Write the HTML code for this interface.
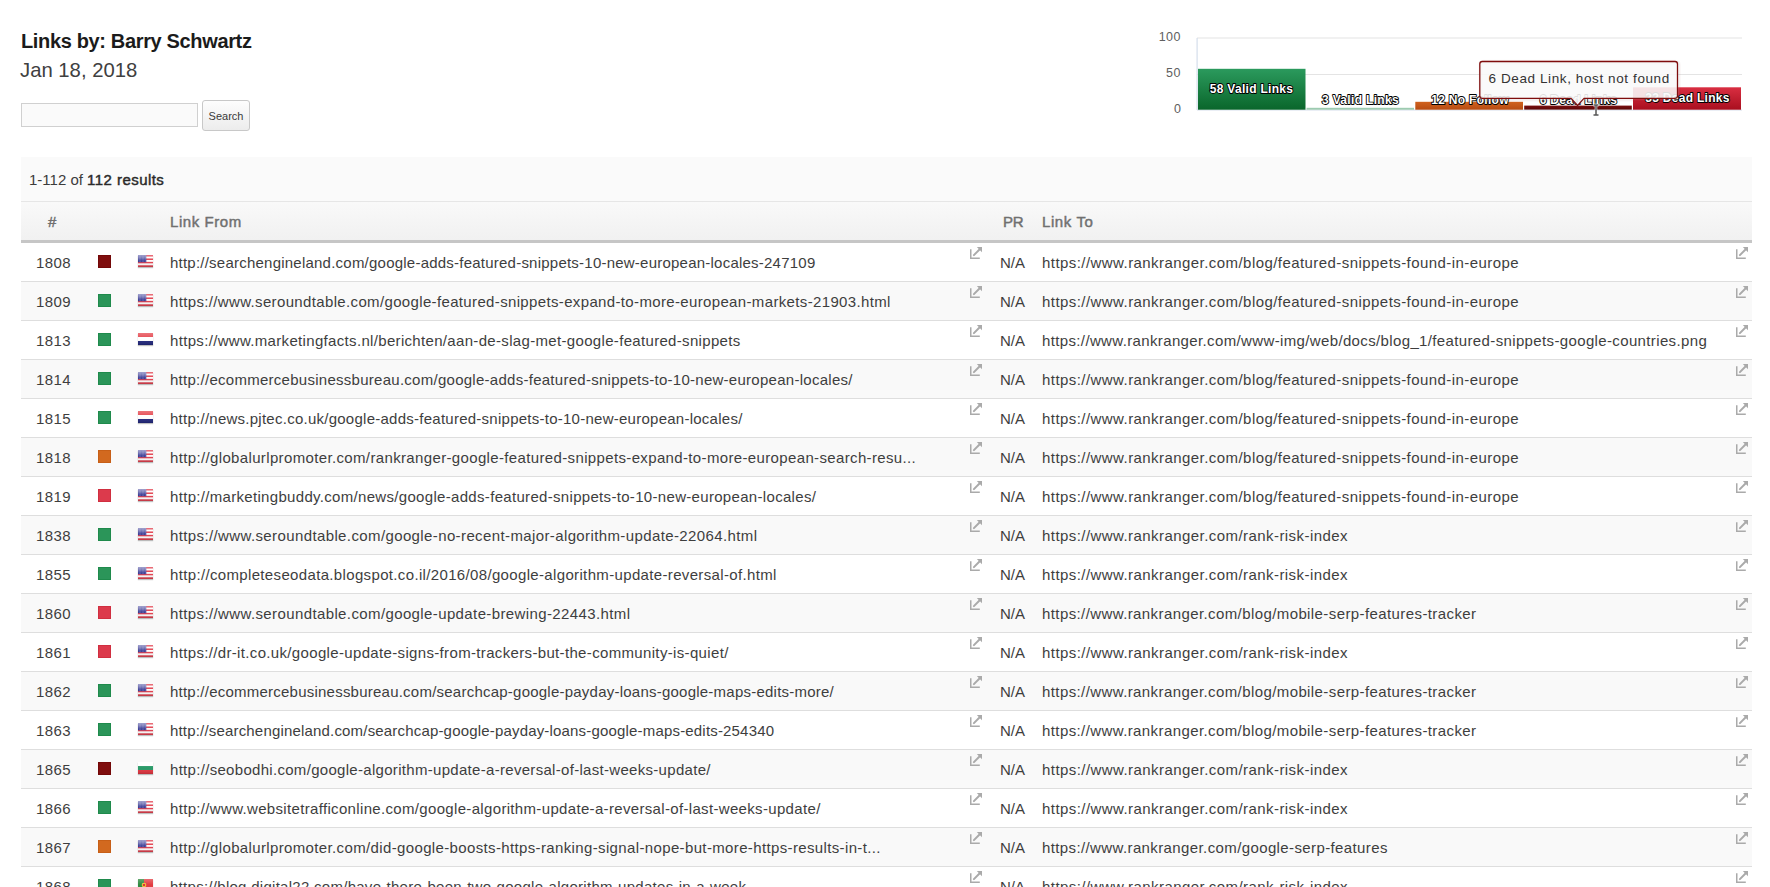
<!DOCTYPE html>
<html><head><meta charset="utf-8"><style>
*{box-sizing:border-box}
html,body{margin:0;padding:0;background:#fff;width:1770px;height:887px;overflow:hidden;font-family:"Liberation Sans",sans-serif;color:#333}
.abs{position:absolute}
#title{left:21px;top:26px;font-size:20px;font-weight:bold;color:#1b1b1b;letter-spacing:-0.35px;white-space:nowrap;line-height:30px}
#date{left:20px;top:55px;font-size:20.3px;color:#404040;white-space:nowrap;line-height:30px}
#inp{left:21px;top:103px;width:177px;height:24px;border:1px solid #d0d0d0;background:#fafafa}
#btn{left:202px;top:100px;width:48px;height:31px;border:1px solid #c8c8c8;border-radius:3px;background:linear-gradient(#fdfdfd,#ececec);font-size:11px;color:#3a3a3a;text-align:center;line-height:30px}
#panel{left:21px;top:157px;width:1731px;height:740px;background:#fafafa}
#res{position:absolute;left:0;top:0;width:1731px;height:45px;border-bottom:1px solid #e6e6e6;font-size:15px;color:#3c3c3c;line-height:46px;padding-left:8px;white-space:nowrap}
#res b{color:#2a2a2a;font-weight:normal;-webkit-text-stroke:0.45px #2a2a2a;letter-spacing:0.45px}
#head{position:absolute;left:0;top:45px;width:1731px;height:41px;background:linear-gradient(#f9f9f9,#f1f1f1);border-bottom:3px solid #c6c6c6;font-size:15px;font-weight:normal;color:#707070;-webkit-text-stroke:0.45px #707070;white-space:nowrap}
#head span{position:absolute;top:0;line-height:39px}
#rows{position:absolute;left:0;top:86px;width:1731px}
.row{position:absolute;left:0;width:1731px;height:39px;border-bottom:1px solid #dedede;font-size:15px;color:#3e3e3e;white-space:nowrap}
.row span{position:absolute;top:0;line-height:39px}
.num{left:15px;letter-spacing:0.4px}
.sq{left:77px;top:12px !important;width:13px;height:13px;border:1px solid}
.flag{position:absolute;left:117px;top:12px;box-shadow:0 1px 1px rgba(0,0,0,0.25)}
.from{left:149px}
.to{left:1021px}
.na{left:979px}
.ext{position:absolute;top:4px}
.e1{left:949px}
.e2{left:1715px}
</style></head><body>
<svg width="0" height="0" style="position:absolute"><defs><linearGradient id="cn" x1="0" y1="0" x2="0" y2="1"><stop offset="0" stop-color="#8282bd"/><stop offset="1" stop-color="#2b2d8c"/></linearGradient><linearGradient id="gl" x1="0" y1="0" x2="0" y2="1"><stop offset="0" stop-color="#fff" stop-opacity="0.25"/><stop offset="0.5" stop-color="#fff" stop-opacity="0.0"/><stop offset="1" stop-color="#000" stop-opacity="0.15"/></linearGradient></defs></svg>
<div id="title" class="abs">Links by: Barry Schwartz</div>
<div id="date" class="abs">Jan 18, 2018</div>
<div id="inp" class="abs"></div>
<div id="btn" class="abs">Search</div>
<svg class="abs" style="left:0;top:0" width="1770" height="140" viewBox="0 0 1770 140">
<defs>
<linearGradient id="gG" x1="0" y1="0" x2="0" y2="1"><stop offset="0" stop-color="#2b9a5d"/><stop offset="1" stop-color="#0a662b"/></linearGradient>
<linearGradient id="gO" x1="0" y1="0" x2="0" y2="1"><stop offset="0" stop-color="#d0621f"/><stop offset="1" stop-color="#b84c12"/></linearGradient>
<linearGradient id="gD" x1="0" y1="0" x2="0" y2="1"><stop offset="0" stop-color="#7a1010"/><stop offset="1" stop-color="#5c0505"/></linearGradient>
<linearGradient id="gR" x1="0" y1="0" x2="0" y2="1"><stop offset="0" stop-color="#d92e41"/><stop offset="1" stop-color="#a90f1f"/></linearGradient>
<filter id="tsh" x="-10%" y="-10%" width="130%" height="140%"><feOffset dx="1" dy="1"/><feGaussianBlur stdDeviation="0.8"/><feComponentTransfer><feFuncA type="linear" slope="0.25"/></feComponentTransfer><feMerge><feMergeNode/><feMergeNode in="SourceGraphic"/></feMerge></filter>
</defs>
<g font-family="Liberation Sans" font-size="12.5" fill="#606060" text-anchor="end">
<text x="1181" y="41" letter-spacing="0.5">100</text>
<text x="1181" y="77" letter-spacing="0.5">50</text>
<text x="1181" y="113">0</text>
</g>
<rect x="1197" y="37.5" width="545" height="1" fill="#e4e4e4"/>
<rect x="1197" y="74" width="545" height="1" fill="#e4e4e4"/>
<rect x="1196.5" y="38" width="1.2" height="72" fill="#d5deeb"/>
<rect x="1197" y="109.5" width="545" height="1" fill="#d5deeb"/>
<rect x="1198" y="68.8" width="107.5" height="40.9" fill="url(#gG)"/>
<rect x="1306.5" y="107.8" width="107.5" height="1.9" fill="#9dcbb0"/>
<rect x="1415.3" y="101.8" width="107.7" height="7.9" fill="url(#gO)"/>
<rect x="1524.2" y="105.6" width="107.6" height="4" fill="url(#gD)"/>
<rect x="1633" y="87.3" width="108" height="22.4" fill="url(#gR)"/>
<g font-family="Liberation Sans" font-size="12" font-weight="bold" fill="#fff" stroke="#000" stroke-width="1.8" stroke-linejoin="round" paint-order="stroke" text-anchor="middle">
<text x="1251.5" y="92.6" letter-spacing="0.3">58 Valid Links</text>
<text x="1360.5" y="104.3" letter-spacing="0.33">3 Valid Links</text>
<text x="1470" y="104.3" letter-spacing="0.3">12 No Follow</text>
<text x="1578.5" y="104.3" letter-spacing="0.3">6 Dead Links</text>
<text x="1687.5" y="102.3" letter-spacing="0.28">33 Dead Links</text>
</g>
<g filter="url(#tsh)">
<path d="M1482.3 61.5 H1675 Q1677.5 61.5 1677.5 64 V95.8 Q1677.5 98.3 1675 98.3 H1584 L1577.6 105.5 L1571 98.3 H1482.3 Q1479.8 98.3 1479.8 95.8 V64 Q1479.8 61.5 1482.3 61.5 Z" fill="rgba(249,249,249,0.86)" stroke="#7f0e0e" stroke-width="1.3"/>
</g>
<text x="1488.5" y="82.5" font-family="Liberation Sans" font-size="13.5" fill="#333" letter-spacing="0.6">6 Dead Link, host not found</text>
<g stroke="#fff" stroke-width="2.5" fill="none"><path d="M1596 105.5 V114.5 M1593 105 H1599 M1593 115 H1599"/></g>
<g stroke="#000" stroke-width="1" fill="none"><path d="M1596 105.5 V114.5 M1593.5 105 H1598.5 M1593.5 115 H1598.5"/></g>
</svg>

<div id="panel" class="abs">
<div id="res">1-112 of <b>112 results</b></div>
<div id="head"><span style="left:27px">#</span><span style="left:149px;letter-spacing:0.56px">Link From</span><span style="left:982px;letter-spacing:-0.3px">PR</span><span style="left:1021px;letter-spacing:0.6px">Link To</span></div>
<div id="rows">
<div class="row" style="top:0px;background:#ffffff">
<span class="num">1808</span><span class="sq" style="background:#7f0e0e;border-color:#730808"></span><svg class="flag" width="15" height="12" viewBox="0 0 15 12"><rect x="0" y="0.000" width="15" height="1.724" fill="#e2404e"/><rect x="0" y="1.714" width="15" height="1.724" fill="#ffffff"/><rect x="0" y="3.429" width="15" height="1.724" fill="#e2404e"/><rect x="0" y="5.143" width="15" height="1.724" fill="#ffffff"/><rect x="0" y="6.857" width="15" height="1.724" fill="#e2404e"/><rect x="0" y="8.571" width="15" height="1.724" fill="#ffffff"/><rect x="0" y="10.286" width="15" height="1.724" fill="#e2404e"/><rect x="0" y="0" width="8.3" height="7.2" fill="url(#cn)"/><rect x="0.90" y="0.80" width="0.7" height="0.7" fill="#b4b6dc" opacity="0.6"/><rect x="2.40" y="0.80" width="0.7" height="0.7" fill="#b4b6dc" opacity="0.6"/><rect x="3.90" y="0.80" width="0.7" height="0.7" fill="#b4b6dc" opacity="0.6"/><rect x="5.40" y="0.80" width="0.7" height="0.7" fill="#b4b6dc" opacity="0.6"/><rect x="6.90" y="0.80" width="0.7" height="0.7" fill="#b4b6dc" opacity="0.6"/><rect x="0.90" y="2.10" width="0.7" height="0.7" fill="#b4b6dc" opacity="0.6"/><rect x="2.40" y="2.10" width="0.7" height="0.7" fill="#b4b6dc" opacity="0.6"/><rect x="3.90" y="2.10" width="0.7" height="0.7" fill="#b4b6dc" opacity="0.6"/><rect x="5.40" y="2.10" width="0.7" height="0.7" fill="#b4b6dc" opacity="0.6"/><rect x="6.90" y="2.10" width="0.7" height="0.7" fill="#b4b6dc" opacity="0.6"/><rect x="0.90" y="3.40" width="0.7" height="0.7" fill="#b4b6dc" opacity="0.6"/><rect x="2.40" y="3.40" width="0.7" height="0.7" fill="#b4b6dc" opacity="0.6"/><rect x="3.90" y="3.40" width="0.7" height="0.7" fill="#b4b6dc" opacity="0.6"/><rect x="5.40" y="3.40" width="0.7" height="0.7" fill="#b4b6dc" opacity="0.6"/><rect x="6.90" y="3.40" width="0.7" height="0.7" fill="#b4b6dc" opacity="0.6"/><rect x="0.90" y="4.70" width="0.7" height="0.7" fill="#b4b6dc" opacity="0.6"/><rect x="2.40" y="4.70" width="0.7" height="0.7" fill="#b4b6dc" opacity="0.6"/><rect x="3.90" y="4.70" width="0.7" height="0.7" fill="#b4b6dc" opacity="0.6"/><rect x="5.40" y="4.70" width="0.7" height="0.7" fill="#b4b6dc" opacity="0.6"/><rect x="6.90" y="4.70" width="0.7" height="0.7" fill="#b4b6dc" opacity="0.6"/><rect x="0.90" y="6.00" width="0.7" height="0.7" fill="#b4b6dc" opacity="0.6"/><rect x="2.40" y="6.00" width="0.7" height="0.7" fill="#b4b6dc" opacity="0.6"/><rect x="3.90" y="6.00" width="0.7" height="0.7" fill="#b4b6dc" opacity="0.6"/><rect x="5.40" y="6.00" width="0.7" height="0.7" fill="#b4b6dc" opacity="0.6"/><rect x="6.90" y="6.00" width="0.7" height="0.7" fill="#b4b6dc" opacity="0.6"/><rect width="15" height="12" fill="url(#gl)"/></svg>
<span class="url from" style="letter-spacing:0.228px">http://searchengineland.com/google-adds-featured-snippets-10-new-european-locales-247109</span><svg class="ext e1" width="12" height="12" viewBox="0 0 12 12"><path d="M0.75 2.2 V11.25 H9.8" fill="none" stroke="#aaa" stroke-width="1.5"/><path d="M3.9 8.1 L10 2" fill="none" stroke="#aaa" stroke-width="2" stroke-linecap="round"/><path d="M6.8 0 H12 V5.2 Z" fill="#aaa"/></svg>
<span class="na">N/A</span><span class="url to" style="letter-spacing:0.439px">https://www.rankranger.com/blog/featured-snippets-found-in-europe</span><svg class="ext e2" width="12" height="12" viewBox="0 0 12 12"><path d="M0.75 2.2 V11.25 H9.8" fill="none" stroke="#aaa" stroke-width="1.5"/><path d="M3.9 8.1 L10 2" fill="none" stroke="#aaa" stroke-width="2" stroke-linecap="round"/><path d="M6.8 0 H12 V5.2 Z" fill="#aaa"/></svg>
</div><div class="row" style="top:39px;background:#f9f9f9">
<span class="num">1809</span><span class="sq" style="background:#2b9559;border-color:#1f8a4c"></span><svg class="flag" width="15" height="12" viewBox="0 0 15 12"><rect x="0" y="0.000" width="15" height="1.724" fill="#e2404e"/><rect x="0" y="1.714" width="15" height="1.724" fill="#ffffff"/><rect x="0" y="3.429" width="15" height="1.724" fill="#e2404e"/><rect x="0" y="5.143" width="15" height="1.724" fill="#ffffff"/><rect x="0" y="6.857" width="15" height="1.724" fill="#e2404e"/><rect x="0" y="8.571" width="15" height="1.724" fill="#ffffff"/><rect x="0" y="10.286" width="15" height="1.724" fill="#e2404e"/><rect x="0" y="0" width="8.3" height="7.2" fill="url(#cn)"/><rect x="0.90" y="0.80" width="0.7" height="0.7" fill="#b4b6dc" opacity="0.6"/><rect x="2.40" y="0.80" width="0.7" height="0.7" fill="#b4b6dc" opacity="0.6"/><rect x="3.90" y="0.80" width="0.7" height="0.7" fill="#b4b6dc" opacity="0.6"/><rect x="5.40" y="0.80" width="0.7" height="0.7" fill="#b4b6dc" opacity="0.6"/><rect x="6.90" y="0.80" width="0.7" height="0.7" fill="#b4b6dc" opacity="0.6"/><rect x="0.90" y="2.10" width="0.7" height="0.7" fill="#b4b6dc" opacity="0.6"/><rect x="2.40" y="2.10" width="0.7" height="0.7" fill="#b4b6dc" opacity="0.6"/><rect x="3.90" y="2.10" width="0.7" height="0.7" fill="#b4b6dc" opacity="0.6"/><rect x="5.40" y="2.10" width="0.7" height="0.7" fill="#b4b6dc" opacity="0.6"/><rect x="6.90" y="2.10" width="0.7" height="0.7" fill="#b4b6dc" opacity="0.6"/><rect x="0.90" y="3.40" width="0.7" height="0.7" fill="#b4b6dc" opacity="0.6"/><rect x="2.40" y="3.40" width="0.7" height="0.7" fill="#b4b6dc" opacity="0.6"/><rect x="3.90" y="3.40" width="0.7" height="0.7" fill="#b4b6dc" opacity="0.6"/><rect x="5.40" y="3.40" width="0.7" height="0.7" fill="#b4b6dc" opacity="0.6"/><rect x="6.90" y="3.40" width="0.7" height="0.7" fill="#b4b6dc" opacity="0.6"/><rect x="0.90" y="4.70" width="0.7" height="0.7" fill="#b4b6dc" opacity="0.6"/><rect x="2.40" y="4.70" width="0.7" height="0.7" fill="#b4b6dc" opacity="0.6"/><rect x="3.90" y="4.70" width="0.7" height="0.7" fill="#b4b6dc" opacity="0.6"/><rect x="5.40" y="4.70" width="0.7" height="0.7" fill="#b4b6dc" opacity="0.6"/><rect x="6.90" y="4.70" width="0.7" height="0.7" fill="#b4b6dc" opacity="0.6"/><rect x="0.90" y="6.00" width="0.7" height="0.7" fill="#b4b6dc" opacity="0.6"/><rect x="2.40" y="6.00" width="0.7" height="0.7" fill="#b4b6dc" opacity="0.6"/><rect x="3.90" y="6.00" width="0.7" height="0.7" fill="#b4b6dc" opacity="0.6"/><rect x="5.40" y="6.00" width="0.7" height="0.7" fill="#b4b6dc" opacity="0.6"/><rect x="6.90" y="6.00" width="0.7" height="0.7" fill="#b4b6dc" opacity="0.6"/><rect width="15" height="12" fill="url(#gl)"/></svg>
<span class="url from" style="letter-spacing:0.351px">https://www.seroundtable.com/google-featured-snippets-expand-to-more-european-markets-21903.html</span><svg class="ext e1" width="12" height="12" viewBox="0 0 12 12"><path d="M0.75 2.2 V11.25 H9.8" fill="none" stroke="#aaa" stroke-width="1.5"/><path d="M3.9 8.1 L10 2" fill="none" stroke="#aaa" stroke-width="2" stroke-linecap="round"/><path d="M6.8 0 H12 V5.2 Z" fill="#aaa"/></svg>
<span class="na">N/A</span><span class="url to" style="letter-spacing:0.439px">https://www.rankranger.com/blog/featured-snippets-found-in-europe</span><svg class="ext e2" width="12" height="12" viewBox="0 0 12 12"><path d="M0.75 2.2 V11.25 H9.8" fill="none" stroke="#aaa" stroke-width="1.5"/><path d="M3.9 8.1 L10 2" fill="none" stroke="#aaa" stroke-width="2" stroke-linecap="round"/><path d="M6.8 0 H12 V5.2 Z" fill="#aaa"/></svg>
</div><div class="row" style="top:78px;background:#ffffff">
<span class="num">1813</span><span class="sq" style="background:#2b9559;border-color:#1f8a4c"></span><svg class="flag" width="15" height="12" viewBox="0 0 15 12"><rect width="15" height="4" fill="#e5474f"/><rect y="4" width="15" height="4" fill="#fff"/><rect y="8" width="15" height="4" fill="#21277c"/><rect width="15" height="12" fill="url(#gl)"/></svg>
<span class="url from" style="letter-spacing:0.327px">https://www.marketingfacts.nl/berichten/aan-de-slag-met-google-featured-snippets</span><svg class="ext e1" width="12" height="12" viewBox="0 0 12 12"><path d="M0.75 2.2 V11.25 H9.8" fill="none" stroke="#aaa" stroke-width="1.5"/><path d="M3.9 8.1 L10 2" fill="none" stroke="#aaa" stroke-width="2" stroke-linecap="round"/><path d="M6.8 0 H12 V5.2 Z" fill="#aaa"/></svg>
<span class="na">N/A</span><span class="url to" style="letter-spacing:0.363px">https://www.rankranger.com/www-img/web/docs/blog_1/featured-snippets-google-countries.png</span><svg class="ext e2" width="12" height="12" viewBox="0 0 12 12"><path d="M0.75 2.2 V11.25 H9.8" fill="none" stroke="#aaa" stroke-width="1.5"/><path d="M3.9 8.1 L10 2" fill="none" stroke="#aaa" stroke-width="2" stroke-linecap="round"/><path d="M6.8 0 H12 V5.2 Z" fill="#aaa"/></svg>
</div><div class="row" style="top:117px;background:#f9f9f9">
<span class="num">1814</span><span class="sq" style="background:#2b9559;border-color:#1f8a4c"></span><svg class="flag" width="15" height="12" viewBox="0 0 15 12"><rect x="0" y="0.000" width="15" height="1.724" fill="#e2404e"/><rect x="0" y="1.714" width="15" height="1.724" fill="#ffffff"/><rect x="0" y="3.429" width="15" height="1.724" fill="#e2404e"/><rect x="0" y="5.143" width="15" height="1.724" fill="#ffffff"/><rect x="0" y="6.857" width="15" height="1.724" fill="#e2404e"/><rect x="0" y="8.571" width="15" height="1.724" fill="#ffffff"/><rect x="0" y="10.286" width="15" height="1.724" fill="#e2404e"/><rect x="0" y="0" width="8.3" height="7.2" fill="url(#cn)"/><rect x="0.90" y="0.80" width="0.7" height="0.7" fill="#b4b6dc" opacity="0.6"/><rect x="2.40" y="0.80" width="0.7" height="0.7" fill="#b4b6dc" opacity="0.6"/><rect x="3.90" y="0.80" width="0.7" height="0.7" fill="#b4b6dc" opacity="0.6"/><rect x="5.40" y="0.80" width="0.7" height="0.7" fill="#b4b6dc" opacity="0.6"/><rect x="6.90" y="0.80" width="0.7" height="0.7" fill="#b4b6dc" opacity="0.6"/><rect x="0.90" y="2.10" width="0.7" height="0.7" fill="#b4b6dc" opacity="0.6"/><rect x="2.40" y="2.10" width="0.7" height="0.7" fill="#b4b6dc" opacity="0.6"/><rect x="3.90" y="2.10" width="0.7" height="0.7" fill="#b4b6dc" opacity="0.6"/><rect x="5.40" y="2.10" width="0.7" height="0.7" fill="#b4b6dc" opacity="0.6"/><rect x="6.90" y="2.10" width="0.7" height="0.7" fill="#b4b6dc" opacity="0.6"/><rect x="0.90" y="3.40" width="0.7" height="0.7" fill="#b4b6dc" opacity="0.6"/><rect x="2.40" y="3.40" width="0.7" height="0.7" fill="#b4b6dc" opacity="0.6"/><rect x="3.90" y="3.40" width="0.7" height="0.7" fill="#b4b6dc" opacity="0.6"/><rect x="5.40" y="3.40" width="0.7" height="0.7" fill="#b4b6dc" opacity="0.6"/><rect x="6.90" y="3.40" width="0.7" height="0.7" fill="#b4b6dc" opacity="0.6"/><rect x="0.90" y="4.70" width="0.7" height="0.7" fill="#b4b6dc" opacity="0.6"/><rect x="2.40" y="4.70" width="0.7" height="0.7" fill="#b4b6dc" opacity="0.6"/><rect x="3.90" y="4.70" width="0.7" height="0.7" fill="#b4b6dc" opacity="0.6"/><rect x="5.40" y="4.70" width="0.7" height="0.7" fill="#b4b6dc" opacity="0.6"/><rect x="6.90" y="4.70" width="0.7" height="0.7" fill="#b4b6dc" opacity="0.6"/><rect x="0.90" y="6.00" width="0.7" height="0.7" fill="#b4b6dc" opacity="0.6"/><rect x="2.40" y="6.00" width="0.7" height="0.7" fill="#b4b6dc" opacity="0.6"/><rect x="3.90" y="6.00" width="0.7" height="0.7" fill="#b4b6dc" opacity="0.6"/><rect x="5.40" y="6.00" width="0.7" height="0.7" fill="#b4b6dc" opacity="0.6"/><rect x="6.90" y="6.00" width="0.7" height="0.7" fill="#b4b6dc" opacity="0.6"/><rect width="15" height="12" fill="url(#gl)"/></svg>
<span class="url from" style="letter-spacing:0.270px">http://ecommercebusinessbureau.com/google-adds-featured-snippets-to-10-new-european-locales/</span><svg class="ext e1" width="12" height="12" viewBox="0 0 12 12"><path d="M0.75 2.2 V11.25 H9.8" fill="none" stroke="#aaa" stroke-width="1.5"/><path d="M3.9 8.1 L10 2" fill="none" stroke="#aaa" stroke-width="2" stroke-linecap="round"/><path d="M6.8 0 H12 V5.2 Z" fill="#aaa"/></svg>
<span class="na">N/A</span><span class="url to" style="letter-spacing:0.439px">https://www.rankranger.com/blog/featured-snippets-found-in-europe</span><svg class="ext e2" width="12" height="12" viewBox="0 0 12 12"><path d="M0.75 2.2 V11.25 H9.8" fill="none" stroke="#aaa" stroke-width="1.5"/><path d="M3.9 8.1 L10 2" fill="none" stroke="#aaa" stroke-width="2" stroke-linecap="round"/><path d="M6.8 0 H12 V5.2 Z" fill="#aaa"/></svg>
</div><div class="row" style="top:156px;background:#ffffff">
<span class="num">1815</span><span class="sq" style="background:#2b9559;border-color:#1f8a4c"></span><svg class="flag" width="15" height="12" viewBox="0 0 15 12"><rect width="15" height="4" fill="#e5474f"/><rect y="4" width="15" height="4" fill="#fff"/><rect y="8" width="15" height="4" fill="#21277c"/><rect width="15" height="12" fill="url(#gl)"/></svg>
<span class="url from" style="letter-spacing:0.254px">http://news.pjtec.co.uk/google-adds-featured-snippets-to-10-new-european-locales/</span><svg class="ext e1" width="12" height="12" viewBox="0 0 12 12"><path d="M0.75 2.2 V11.25 H9.8" fill="none" stroke="#aaa" stroke-width="1.5"/><path d="M3.9 8.1 L10 2" fill="none" stroke="#aaa" stroke-width="2" stroke-linecap="round"/><path d="M6.8 0 H12 V5.2 Z" fill="#aaa"/></svg>
<span class="na">N/A</span><span class="url to" style="letter-spacing:0.439px">https://www.rankranger.com/blog/featured-snippets-found-in-europe</span><svg class="ext e2" width="12" height="12" viewBox="0 0 12 12"><path d="M0.75 2.2 V11.25 H9.8" fill="none" stroke="#aaa" stroke-width="1.5"/><path d="M3.9 8.1 L10 2" fill="none" stroke="#aaa" stroke-width="2" stroke-linecap="round"/><path d="M6.8 0 H12 V5.2 Z" fill="#aaa"/></svg>
</div><div class="row" style="top:195px;background:#f9f9f9">
<span class="num">1818</span><span class="sq" style="background:#d2691f;border-color:#c75f17"></span><svg class="flag" width="15" height="12" viewBox="0 0 15 12"><rect x="0" y="0.000" width="15" height="1.724" fill="#e2404e"/><rect x="0" y="1.714" width="15" height="1.724" fill="#ffffff"/><rect x="0" y="3.429" width="15" height="1.724" fill="#e2404e"/><rect x="0" y="5.143" width="15" height="1.724" fill="#ffffff"/><rect x="0" y="6.857" width="15" height="1.724" fill="#e2404e"/><rect x="0" y="8.571" width="15" height="1.724" fill="#ffffff"/><rect x="0" y="10.286" width="15" height="1.724" fill="#e2404e"/><rect x="0" y="0" width="8.3" height="7.2" fill="url(#cn)"/><rect x="0.90" y="0.80" width="0.7" height="0.7" fill="#b4b6dc" opacity="0.6"/><rect x="2.40" y="0.80" width="0.7" height="0.7" fill="#b4b6dc" opacity="0.6"/><rect x="3.90" y="0.80" width="0.7" height="0.7" fill="#b4b6dc" opacity="0.6"/><rect x="5.40" y="0.80" width="0.7" height="0.7" fill="#b4b6dc" opacity="0.6"/><rect x="6.90" y="0.80" width="0.7" height="0.7" fill="#b4b6dc" opacity="0.6"/><rect x="0.90" y="2.10" width="0.7" height="0.7" fill="#b4b6dc" opacity="0.6"/><rect x="2.40" y="2.10" width="0.7" height="0.7" fill="#b4b6dc" opacity="0.6"/><rect x="3.90" y="2.10" width="0.7" height="0.7" fill="#b4b6dc" opacity="0.6"/><rect x="5.40" y="2.10" width="0.7" height="0.7" fill="#b4b6dc" opacity="0.6"/><rect x="6.90" y="2.10" width="0.7" height="0.7" fill="#b4b6dc" opacity="0.6"/><rect x="0.90" y="3.40" width="0.7" height="0.7" fill="#b4b6dc" opacity="0.6"/><rect x="2.40" y="3.40" width="0.7" height="0.7" fill="#b4b6dc" opacity="0.6"/><rect x="3.90" y="3.40" width="0.7" height="0.7" fill="#b4b6dc" opacity="0.6"/><rect x="5.40" y="3.40" width="0.7" height="0.7" fill="#b4b6dc" opacity="0.6"/><rect x="6.90" y="3.40" width="0.7" height="0.7" fill="#b4b6dc" opacity="0.6"/><rect x="0.90" y="4.70" width="0.7" height="0.7" fill="#b4b6dc" opacity="0.6"/><rect x="2.40" y="4.70" width="0.7" height="0.7" fill="#b4b6dc" opacity="0.6"/><rect x="3.90" y="4.70" width="0.7" height="0.7" fill="#b4b6dc" opacity="0.6"/><rect x="5.40" y="4.70" width="0.7" height="0.7" fill="#b4b6dc" opacity="0.6"/><rect x="6.90" y="4.70" width="0.7" height="0.7" fill="#b4b6dc" opacity="0.6"/><rect x="0.90" y="6.00" width="0.7" height="0.7" fill="#b4b6dc" opacity="0.6"/><rect x="2.40" y="6.00" width="0.7" height="0.7" fill="#b4b6dc" opacity="0.6"/><rect x="3.90" y="6.00" width="0.7" height="0.7" fill="#b4b6dc" opacity="0.6"/><rect x="5.40" y="6.00" width="0.7" height="0.7" fill="#b4b6dc" opacity="0.6"/><rect x="6.90" y="6.00" width="0.7" height="0.7" fill="#b4b6dc" opacity="0.6"/><rect width="15" height="12" fill="url(#gl)"/></svg>
<span class="url from" style="letter-spacing:0.355px">http://globalurlpromoter.com/rankranger-google-featured-snippets-expand-to-more-european-search-resu...</span><svg class="ext e1" width="12" height="12" viewBox="0 0 12 12"><path d="M0.75 2.2 V11.25 H9.8" fill="none" stroke="#aaa" stroke-width="1.5"/><path d="M3.9 8.1 L10 2" fill="none" stroke="#aaa" stroke-width="2" stroke-linecap="round"/><path d="M6.8 0 H12 V5.2 Z" fill="#aaa"/></svg>
<span class="na">N/A</span><span class="url to" style="letter-spacing:0.439px">https://www.rankranger.com/blog/featured-snippets-found-in-europe</span><svg class="ext e2" width="12" height="12" viewBox="0 0 12 12"><path d="M0.75 2.2 V11.25 H9.8" fill="none" stroke="#aaa" stroke-width="1.5"/><path d="M3.9 8.1 L10 2" fill="none" stroke="#aaa" stroke-width="2" stroke-linecap="round"/><path d="M6.8 0 H12 V5.2 Z" fill="#aaa"/></svg>
</div><div class="row" style="top:234px;background:#ffffff">
<span class="num">1819</span><span class="sq" style="background:#dc3a4c;border-color:#d02f40"></span><svg class="flag" width="15" height="12" viewBox="0 0 15 12"><rect x="0" y="0.000" width="15" height="1.724" fill="#e2404e"/><rect x="0" y="1.714" width="15" height="1.724" fill="#ffffff"/><rect x="0" y="3.429" width="15" height="1.724" fill="#e2404e"/><rect x="0" y="5.143" width="15" height="1.724" fill="#ffffff"/><rect x="0" y="6.857" width="15" height="1.724" fill="#e2404e"/><rect x="0" y="8.571" width="15" height="1.724" fill="#ffffff"/><rect x="0" y="10.286" width="15" height="1.724" fill="#e2404e"/><rect x="0" y="0" width="8.3" height="7.2" fill="url(#cn)"/><rect x="0.90" y="0.80" width="0.7" height="0.7" fill="#b4b6dc" opacity="0.6"/><rect x="2.40" y="0.80" width="0.7" height="0.7" fill="#b4b6dc" opacity="0.6"/><rect x="3.90" y="0.80" width="0.7" height="0.7" fill="#b4b6dc" opacity="0.6"/><rect x="5.40" y="0.80" width="0.7" height="0.7" fill="#b4b6dc" opacity="0.6"/><rect x="6.90" y="0.80" width="0.7" height="0.7" fill="#b4b6dc" opacity="0.6"/><rect x="0.90" y="2.10" width="0.7" height="0.7" fill="#b4b6dc" opacity="0.6"/><rect x="2.40" y="2.10" width="0.7" height="0.7" fill="#b4b6dc" opacity="0.6"/><rect x="3.90" y="2.10" width="0.7" height="0.7" fill="#b4b6dc" opacity="0.6"/><rect x="5.40" y="2.10" width="0.7" height="0.7" fill="#b4b6dc" opacity="0.6"/><rect x="6.90" y="2.10" width="0.7" height="0.7" fill="#b4b6dc" opacity="0.6"/><rect x="0.90" y="3.40" width="0.7" height="0.7" fill="#b4b6dc" opacity="0.6"/><rect x="2.40" y="3.40" width="0.7" height="0.7" fill="#b4b6dc" opacity="0.6"/><rect x="3.90" y="3.40" width="0.7" height="0.7" fill="#b4b6dc" opacity="0.6"/><rect x="5.40" y="3.40" width="0.7" height="0.7" fill="#b4b6dc" opacity="0.6"/><rect x="6.90" y="3.40" width="0.7" height="0.7" fill="#b4b6dc" opacity="0.6"/><rect x="0.90" y="4.70" width="0.7" height="0.7" fill="#b4b6dc" opacity="0.6"/><rect x="2.40" y="4.70" width="0.7" height="0.7" fill="#b4b6dc" opacity="0.6"/><rect x="3.90" y="4.70" width="0.7" height="0.7" fill="#b4b6dc" opacity="0.6"/><rect x="5.40" y="4.70" width="0.7" height="0.7" fill="#b4b6dc" opacity="0.6"/><rect x="6.90" y="4.70" width="0.7" height="0.7" fill="#b4b6dc" opacity="0.6"/><rect x="0.90" y="6.00" width="0.7" height="0.7" fill="#b4b6dc" opacity="0.6"/><rect x="2.40" y="6.00" width="0.7" height="0.7" fill="#b4b6dc" opacity="0.6"/><rect x="3.90" y="6.00" width="0.7" height="0.7" fill="#b4b6dc" opacity="0.6"/><rect x="5.40" y="6.00" width="0.7" height="0.7" fill="#b4b6dc" opacity="0.6"/><rect x="6.90" y="6.00" width="0.7" height="0.7" fill="#b4b6dc" opacity="0.6"/><rect width="15" height="12" fill="url(#gl)"/></svg>
<span class="url from" style="letter-spacing:0.316px">http://marketingbuddy.com/news/google-adds-featured-snippets-to-10-new-european-locales/</span><svg class="ext e1" width="12" height="12" viewBox="0 0 12 12"><path d="M0.75 2.2 V11.25 H9.8" fill="none" stroke="#aaa" stroke-width="1.5"/><path d="M3.9 8.1 L10 2" fill="none" stroke="#aaa" stroke-width="2" stroke-linecap="round"/><path d="M6.8 0 H12 V5.2 Z" fill="#aaa"/></svg>
<span class="na">N/A</span><span class="url to" style="letter-spacing:0.439px">https://www.rankranger.com/blog/featured-snippets-found-in-europe</span><svg class="ext e2" width="12" height="12" viewBox="0 0 12 12"><path d="M0.75 2.2 V11.25 H9.8" fill="none" stroke="#aaa" stroke-width="1.5"/><path d="M3.9 8.1 L10 2" fill="none" stroke="#aaa" stroke-width="2" stroke-linecap="round"/><path d="M6.8 0 H12 V5.2 Z" fill="#aaa"/></svg>
</div><div class="row" style="top:273px;background:#f9f9f9">
<span class="num">1838</span><span class="sq" style="background:#2b9559;border-color:#1f8a4c"></span><svg class="flag" width="15" height="12" viewBox="0 0 15 12"><rect x="0" y="0.000" width="15" height="1.724" fill="#e2404e"/><rect x="0" y="1.714" width="15" height="1.724" fill="#ffffff"/><rect x="0" y="3.429" width="15" height="1.724" fill="#e2404e"/><rect x="0" y="5.143" width="15" height="1.724" fill="#ffffff"/><rect x="0" y="6.857" width="15" height="1.724" fill="#e2404e"/><rect x="0" y="8.571" width="15" height="1.724" fill="#ffffff"/><rect x="0" y="10.286" width="15" height="1.724" fill="#e2404e"/><rect x="0" y="0" width="8.3" height="7.2" fill="url(#cn)"/><rect x="0.90" y="0.80" width="0.7" height="0.7" fill="#b4b6dc" opacity="0.6"/><rect x="2.40" y="0.80" width="0.7" height="0.7" fill="#b4b6dc" opacity="0.6"/><rect x="3.90" y="0.80" width="0.7" height="0.7" fill="#b4b6dc" opacity="0.6"/><rect x="5.40" y="0.80" width="0.7" height="0.7" fill="#b4b6dc" opacity="0.6"/><rect x="6.90" y="0.80" width="0.7" height="0.7" fill="#b4b6dc" opacity="0.6"/><rect x="0.90" y="2.10" width="0.7" height="0.7" fill="#b4b6dc" opacity="0.6"/><rect x="2.40" y="2.10" width="0.7" height="0.7" fill="#b4b6dc" opacity="0.6"/><rect x="3.90" y="2.10" width="0.7" height="0.7" fill="#b4b6dc" opacity="0.6"/><rect x="5.40" y="2.10" width="0.7" height="0.7" fill="#b4b6dc" opacity="0.6"/><rect x="6.90" y="2.10" width="0.7" height="0.7" fill="#b4b6dc" opacity="0.6"/><rect x="0.90" y="3.40" width="0.7" height="0.7" fill="#b4b6dc" opacity="0.6"/><rect x="2.40" y="3.40" width="0.7" height="0.7" fill="#b4b6dc" opacity="0.6"/><rect x="3.90" y="3.40" width="0.7" height="0.7" fill="#b4b6dc" opacity="0.6"/><rect x="5.40" y="3.40" width="0.7" height="0.7" fill="#b4b6dc" opacity="0.6"/><rect x="6.90" y="3.40" width="0.7" height="0.7" fill="#b4b6dc" opacity="0.6"/><rect x="0.90" y="4.70" width="0.7" height="0.7" fill="#b4b6dc" opacity="0.6"/><rect x="2.40" y="4.70" width="0.7" height="0.7" fill="#b4b6dc" opacity="0.6"/><rect x="3.90" y="4.70" width="0.7" height="0.7" fill="#b4b6dc" opacity="0.6"/><rect x="5.40" y="4.70" width="0.7" height="0.7" fill="#b4b6dc" opacity="0.6"/><rect x="6.90" y="4.70" width="0.7" height="0.7" fill="#b4b6dc" opacity="0.6"/><rect x="0.90" y="6.00" width="0.7" height="0.7" fill="#b4b6dc" opacity="0.6"/><rect x="2.40" y="6.00" width="0.7" height="0.7" fill="#b4b6dc" opacity="0.6"/><rect x="3.90" y="6.00" width="0.7" height="0.7" fill="#b4b6dc" opacity="0.6"/><rect x="5.40" y="6.00" width="0.7" height="0.7" fill="#b4b6dc" opacity="0.6"/><rect x="6.90" y="6.00" width="0.7" height="0.7" fill="#b4b6dc" opacity="0.6"/><rect width="15" height="12" fill="url(#gl)"/></svg>
<span class="url from" style="letter-spacing:0.385px">https://www.seroundtable.com/google-no-recent-major-algorithm-update-22064.html</span><svg class="ext e1" width="12" height="12" viewBox="0 0 12 12"><path d="M0.75 2.2 V11.25 H9.8" fill="none" stroke="#aaa" stroke-width="1.5"/><path d="M3.9 8.1 L10 2" fill="none" stroke="#aaa" stroke-width="2" stroke-linecap="round"/><path d="M6.8 0 H12 V5.2 Z" fill="#aaa"/></svg>
<span class="na">N/A</span><span class="url to" style="letter-spacing:0.437px">https://www.rankranger.com/rank-risk-index</span><svg class="ext e2" width="12" height="12" viewBox="0 0 12 12"><path d="M0.75 2.2 V11.25 H9.8" fill="none" stroke="#aaa" stroke-width="1.5"/><path d="M3.9 8.1 L10 2" fill="none" stroke="#aaa" stroke-width="2" stroke-linecap="round"/><path d="M6.8 0 H12 V5.2 Z" fill="#aaa"/></svg>
</div><div class="row" style="top:312px;background:#ffffff">
<span class="num">1855</span><span class="sq" style="background:#2b9559;border-color:#1f8a4c"></span><svg class="flag" width="15" height="12" viewBox="0 0 15 12"><rect x="0" y="0.000" width="15" height="1.724" fill="#e2404e"/><rect x="0" y="1.714" width="15" height="1.724" fill="#ffffff"/><rect x="0" y="3.429" width="15" height="1.724" fill="#e2404e"/><rect x="0" y="5.143" width="15" height="1.724" fill="#ffffff"/><rect x="0" y="6.857" width="15" height="1.724" fill="#e2404e"/><rect x="0" y="8.571" width="15" height="1.724" fill="#ffffff"/><rect x="0" y="10.286" width="15" height="1.724" fill="#e2404e"/><rect x="0" y="0" width="8.3" height="7.2" fill="url(#cn)"/><rect x="0.90" y="0.80" width="0.7" height="0.7" fill="#b4b6dc" opacity="0.6"/><rect x="2.40" y="0.80" width="0.7" height="0.7" fill="#b4b6dc" opacity="0.6"/><rect x="3.90" y="0.80" width="0.7" height="0.7" fill="#b4b6dc" opacity="0.6"/><rect x="5.40" y="0.80" width="0.7" height="0.7" fill="#b4b6dc" opacity="0.6"/><rect x="6.90" y="0.80" width="0.7" height="0.7" fill="#b4b6dc" opacity="0.6"/><rect x="0.90" y="2.10" width="0.7" height="0.7" fill="#b4b6dc" opacity="0.6"/><rect x="2.40" y="2.10" width="0.7" height="0.7" fill="#b4b6dc" opacity="0.6"/><rect x="3.90" y="2.10" width="0.7" height="0.7" fill="#b4b6dc" opacity="0.6"/><rect x="5.40" y="2.10" width="0.7" height="0.7" fill="#b4b6dc" opacity="0.6"/><rect x="6.90" y="2.10" width="0.7" height="0.7" fill="#b4b6dc" opacity="0.6"/><rect x="0.90" y="3.40" width="0.7" height="0.7" fill="#b4b6dc" opacity="0.6"/><rect x="2.40" y="3.40" width="0.7" height="0.7" fill="#b4b6dc" opacity="0.6"/><rect x="3.90" y="3.40" width="0.7" height="0.7" fill="#b4b6dc" opacity="0.6"/><rect x="5.40" y="3.40" width="0.7" height="0.7" fill="#b4b6dc" opacity="0.6"/><rect x="6.90" y="3.40" width="0.7" height="0.7" fill="#b4b6dc" opacity="0.6"/><rect x="0.90" y="4.70" width="0.7" height="0.7" fill="#b4b6dc" opacity="0.6"/><rect x="2.40" y="4.70" width="0.7" height="0.7" fill="#b4b6dc" opacity="0.6"/><rect x="3.90" y="4.70" width="0.7" height="0.7" fill="#b4b6dc" opacity="0.6"/><rect x="5.40" y="4.70" width="0.7" height="0.7" fill="#b4b6dc" opacity="0.6"/><rect x="6.90" y="4.70" width="0.7" height="0.7" fill="#b4b6dc" opacity="0.6"/><rect x="0.90" y="6.00" width="0.7" height="0.7" fill="#b4b6dc" opacity="0.6"/><rect x="2.40" y="6.00" width="0.7" height="0.7" fill="#b4b6dc" opacity="0.6"/><rect x="3.90" y="6.00" width="0.7" height="0.7" fill="#b4b6dc" opacity="0.6"/><rect x="5.40" y="6.00" width="0.7" height="0.7" fill="#b4b6dc" opacity="0.6"/><rect x="6.90" y="6.00" width="0.7" height="0.7" fill="#b4b6dc" opacity="0.6"/><rect width="15" height="12" fill="url(#gl)"/></svg>
<span class="url from" style="letter-spacing:0.345px">http://completeseodata.blogspot.co.il/2016/08/google-algorithm-update-reversal-of.html</span><svg class="ext e1" width="12" height="12" viewBox="0 0 12 12"><path d="M0.75 2.2 V11.25 H9.8" fill="none" stroke="#aaa" stroke-width="1.5"/><path d="M3.9 8.1 L10 2" fill="none" stroke="#aaa" stroke-width="2" stroke-linecap="round"/><path d="M6.8 0 H12 V5.2 Z" fill="#aaa"/></svg>
<span class="na">N/A</span><span class="url to" style="letter-spacing:0.437px">https://www.rankranger.com/rank-risk-index</span><svg class="ext e2" width="12" height="12" viewBox="0 0 12 12"><path d="M0.75 2.2 V11.25 H9.8" fill="none" stroke="#aaa" stroke-width="1.5"/><path d="M3.9 8.1 L10 2" fill="none" stroke="#aaa" stroke-width="2" stroke-linecap="round"/><path d="M6.8 0 H12 V5.2 Z" fill="#aaa"/></svg>
</div><div class="row" style="top:351px;background:#f9f9f9">
<span class="num">1860</span><span class="sq" style="background:#dc3a4c;border-color:#d02f40"></span><svg class="flag" width="15" height="12" viewBox="0 0 15 12"><rect x="0" y="0.000" width="15" height="1.724" fill="#e2404e"/><rect x="0" y="1.714" width="15" height="1.724" fill="#ffffff"/><rect x="0" y="3.429" width="15" height="1.724" fill="#e2404e"/><rect x="0" y="5.143" width="15" height="1.724" fill="#ffffff"/><rect x="0" y="6.857" width="15" height="1.724" fill="#e2404e"/><rect x="0" y="8.571" width="15" height="1.724" fill="#ffffff"/><rect x="0" y="10.286" width="15" height="1.724" fill="#e2404e"/><rect x="0" y="0" width="8.3" height="7.2" fill="url(#cn)"/><rect x="0.90" y="0.80" width="0.7" height="0.7" fill="#b4b6dc" opacity="0.6"/><rect x="2.40" y="0.80" width="0.7" height="0.7" fill="#b4b6dc" opacity="0.6"/><rect x="3.90" y="0.80" width="0.7" height="0.7" fill="#b4b6dc" opacity="0.6"/><rect x="5.40" y="0.80" width="0.7" height="0.7" fill="#b4b6dc" opacity="0.6"/><rect x="6.90" y="0.80" width="0.7" height="0.7" fill="#b4b6dc" opacity="0.6"/><rect x="0.90" y="2.10" width="0.7" height="0.7" fill="#b4b6dc" opacity="0.6"/><rect x="2.40" y="2.10" width="0.7" height="0.7" fill="#b4b6dc" opacity="0.6"/><rect x="3.90" y="2.10" width="0.7" height="0.7" fill="#b4b6dc" opacity="0.6"/><rect x="5.40" y="2.10" width="0.7" height="0.7" fill="#b4b6dc" opacity="0.6"/><rect x="6.90" y="2.10" width="0.7" height="0.7" fill="#b4b6dc" opacity="0.6"/><rect x="0.90" y="3.40" width="0.7" height="0.7" fill="#b4b6dc" opacity="0.6"/><rect x="2.40" y="3.40" width="0.7" height="0.7" fill="#b4b6dc" opacity="0.6"/><rect x="3.90" y="3.40" width="0.7" height="0.7" fill="#b4b6dc" opacity="0.6"/><rect x="5.40" y="3.40" width="0.7" height="0.7" fill="#b4b6dc" opacity="0.6"/><rect x="6.90" y="3.40" width="0.7" height="0.7" fill="#b4b6dc" opacity="0.6"/><rect x="0.90" y="4.70" width="0.7" height="0.7" fill="#b4b6dc" opacity="0.6"/><rect x="2.40" y="4.70" width="0.7" height="0.7" fill="#b4b6dc" opacity="0.6"/><rect x="3.90" y="4.70" width="0.7" height="0.7" fill="#b4b6dc" opacity="0.6"/><rect x="5.40" y="4.70" width="0.7" height="0.7" fill="#b4b6dc" opacity="0.6"/><rect x="6.90" y="4.70" width="0.7" height="0.7" fill="#b4b6dc" opacity="0.6"/><rect x="0.90" y="6.00" width="0.7" height="0.7" fill="#b4b6dc" opacity="0.6"/><rect x="2.40" y="6.00" width="0.7" height="0.7" fill="#b4b6dc" opacity="0.6"/><rect x="3.90" y="6.00" width="0.7" height="0.7" fill="#b4b6dc" opacity="0.6"/><rect x="5.40" y="6.00" width="0.7" height="0.7" fill="#b4b6dc" opacity="0.6"/><rect x="6.90" y="6.00" width="0.7" height="0.7" fill="#b4b6dc" opacity="0.6"/><rect width="15" height="12" fill="url(#gl)"/></svg>
<span class="url from" style="letter-spacing:0.385px">https://www.seroundtable.com/google-update-brewing-22443.html</span><svg class="ext e1" width="12" height="12" viewBox="0 0 12 12"><path d="M0.75 2.2 V11.25 H9.8" fill="none" stroke="#aaa" stroke-width="1.5"/><path d="M3.9 8.1 L10 2" fill="none" stroke="#aaa" stroke-width="2" stroke-linecap="round"/><path d="M6.8 0 H12 V5.2 Z" fill="#aaa"/></svg>
<span class="na">N/A</span><span class="url to" style="letter-spacing:0.405px">https://www.rankranger.com/blog/mobile-serp-features-tracker</span><svg class="ext e2" width="12" height="12" viewBox="0 0 12 12"><path d="M0.75 2.2 V11.25 H9.8" fill="none" stroke="#aaa" stroke-width="1.5"/><path d="M3.9 8.1 L10 2" fill="none" stroke="#aaa" stroke-width="2" stroke-linecap="round"/><path d="M6.8 0 H12 V5.2 Z" fill="#aaa"/></svg>
</div><div class="row" style="top:390px;background:#ffffff">
<span class="num">1861</span><span class="sq" style="background:#dc3a4c;border-color:#d02f40"></span><svg class="flag" width="15" height="12" viewBox="0 0 15 12"><rect x="0" y="0.000" width="15" height="1.724" fill="#e2404e"/><rect x="0" y="1.714" width="15" height="1.724" fill="#ffffff"/><rect x="0" y="3.429" width="15" height="1.724" fill="#e2404e"/><rect x="0" y="5.143" width="15" height="1.724" fill="#ffffff"/><rect x="0" y="6.857" width="15" height="1.724" fill="#e2404e"/><rect x="0" y="8.571" width="15" height="1.724" fill="#ffffff"/><rect x="0" y="10.286" width="15" height="1.724" fill="#e2404e"/><rect x="0" y="0" width="8.3" height="7.2" fill="url(#cn)"/><rect x="0.90" y="0.80" width="0.7" height="0.7" fill="#b4b6dc" opacity="0.6"/><rect x="2.40" y="0.80" width="0.7" height="0.7" fill="#b4b6dc" opacity="0.6"/><rect x="3.90" y="0.80" width="0.7" height="0.7" fill="#b4b6dc" opacity="0.6"/><rect x="5.40" y="0.80" width="0.7" height="0.7" fill="#b4b6dc" opacity="0.6"/><rect x="6.90" y="0.80" width="0.7" height="0.7" fill="#b4b6dc" opacity="0.6"/><rect x="0.90" y="2.10" width="0.7" height="0.7" fill="#b4b6dc" opacity="0.6"/><rect x="2.40" y="2.10" width="0.7" height="0.7" fill="#b4b6dc" opacity="0.6"/><rect x="3.90" y="2.10" width="0.7" height="0.7" fill="#b4b6dc" opacity="0.6"/><rect x="5.40" y="2.10" width="0.7" height="0.7" fill="#b4b6dc" opacity="0.6"/><rect x="6.90" y="2.10" width="0.7" height="0.7" fill="#b4b6dc" opacity="0.6"/><rect x="0.90" y="3.40" width="0.7" height="0.7" fill="#b4b6dc" opacity="0.6"/><rect x="2.40" y="3.40" width="0.7" height="0.7" fill="#b4b6dc" opacity="0.6"/><rect x="3.90" y="3.40" width="0.7" height="0.7" fill="#b4b6dc" opacity="0.6"/><rect x="5.40" y="3.40" width="0.7" height="0.7" fill="#b4b6dc" opacity="0.6"/><rect x="6.90" y="3.40" width="0.7" height="0.7" fill="#b4b6dc" opacity="0.6"/><rect x="0.90" y="4.70" width="0.7" height="0.7" fill="#b4b6dc" opacity="0.6"/><rect x="2.40" y="4.70" width="0.7" height="0.7" fill="#b4b6dc" opacity="0.6"/><rect x="3.90" y="4.70" width="0.7" height="0.7" fill="#b4b6dc" opacity="0.6"/><rect x="5.40" y="4.70" width="0.7" height="0.7" fill="#b4b6dc" opacity="0.6"/><rect x="6.90" y="4.70" width="0.7" height="0.7" fill="#b4b6dc" opacity="0.6"/><rect x="0.90" y="6.00" width="0.7" height="0.7" fill="#b4b6dc" opacity="0.6"/><rect x="2.40" y="6.00" width="0.7" height="0.7" fill="#b4b6dc" opacity="0.6"/><rect x="3.90" y="6.00" width="0.7" height="0.7" fill="#b4b6dc" opacity="0.6"/><rect x="5.40" y="6.00" width="0.7" height="0.7" fill="#b4b6dc" opacity="0.6"/><rect x="6.90" y="6.00" width="0.7" height="0.7" fill="#b4b6dc" opacity="0.6"/><rect width="15" height="12" fill="url(#gl)"/></svg>
<span class="url from" style="letter-spacing:0.341px">https://dr-it.co.uk/google-update-signs-from-trackers-but-the-community-is-quiet/</span><svg class="ext e1" width="12" height="12" viewBox="0 0 12 12"><path d="M0.75 2.2 V11.25 H9.8" fill="none" stroke="#aaa" stroke-width="1.5"/><path d="M3.9 8.1 L10 2" fill="none" stroke="#aaa" stroke-width="2" stroke-linecap="round"/><path d="M6.8 0 H12 V5.2 Z" fill="#aaa"/></svg>
<span class="na">N/A</span><span class="url to" style="letter-spacing:0.437px">https://www.rankranger.com/rank-risk-index</span><svg class="ext e2" width="12" height="12" viewBox="0 0 12 12"><path d="M0.75 2.2 V11.25 H9.8" fill="none" stroke="#aaa" stroke-width="1.5"/><path d="M3.9 8.1 L10 2" fill="none" stroke="#aaa" stroke-width="2" stroke-linecap="round"/><path d="M6.8 0 H12 V5.2 Z" fill="#aaa"/></svg>
</div><div class="row" style="top:429px;background:#f9f9f9">
<span class="num">1862</span><span class="sq" style="background:#2b9559;border-color:#1f8a4c"></span><svg class="flag" width="15" height="12" viewBox="0 0 15 12"><rect x="0" y="0.000" width="15" height="1.724" fill="#e2404e"/><rect x="0" y="1.714" width="15" height="1.724" fill="#ffffff"/><rect x="0" y="3.429" width="15" height="1.724" fill="#e2404e"/><rect x="0" y="5.143" width="15" height="1.724" fill="#ffffff"/><rect x="0" y="6.857" width="15" height="1.724" fill="#e2404e"/><rect x="0" y="8.571" width="15" height="1.724" fill="#ffffff"/><rect x="0" y="10.286" width="15" height="1.724" fill="#e2404e"/><rect x="0" y="0" width="8.3" height="7.2" fill="url(#cn)"/><rect x="0.90" y="0.80" width="0.7" height="0.7" fill="#b4b6dc" opacity="0.6"/><rect x="2.40" y="0.80" width="0.7" height="0.7" fill="#b4b6dc" opacity="0.6"/><rect x="3.90" y="0.80" width="0.7" height="0.7" fill="#b4b6dc" opacity="0.6"/><rect x="5.40" y="0.80" width="0.7" height="0.7" fill="#b4b6dc" opacity="0.6"/><rect x="6.90" y="0.80" width="0.7" height="0.7" fill="#b4b6dc" opacity="0.6"/><rect x="0.90" y="2.10" width="0.7" height="0.7" fill="#b4b6dc" opacity="0.6"/><rect x="2.40" y="2.10" width="0.7" height="0.7" fill="#b4b6dc" opacity="0.6"/><rect x="3.90" y="2.10" width="0.7" height="0.7" fill="#b4b6dc" opacity="0.6"/><rect x="5.40" y="2.10" width="0.7" height="0.7" fill="#b4b6dc" opacity="0.6"/><rect x="6.90" y="2.10" width="0.7" height="0.7" fill="#b4b6dc" opacity="0.6"/><rect x="0.90" y="3.40" width="0.7" height="0.7" fill="#b4b6dc" opacity="0.6"/><rect x="2.40" y="3.40" width="0.7" height="0.7" fill="#b4b6dc" opacity="0.6"/><rect x="3.90" y="3.40" width="0.7" height="0.7" fill="#b4b6dc" opacity="0.6"/><rect x="5.40" y="3.40" width="0.7" height="0.7" fill="#b4b6dc" opacity="0.6"/><rect x="6.90" y="3.40" width="0.7" height="0.7" fill="#b4b6dc" opacity="0.6"/><rect x="0.90" y="4.70" width="0.7" height="0.7" fill="#b4b6dc" opacity="0.6"/><rect x="2.40" y="4.70" width="0.7" height="0.7" fill="#b4b6dc" opacity="0.6"/><rect x="3.90" y="4.70" width="0.7" height="0.7" fill="#b4b6dc" opacity="0.6"/><rect x="5.40" y="4.70" width="0.7" height="0.7" fill="#b4b6dc" opacity="0.6"/><rect x="6.90" y="4.70" width="0.7" height="0.7" fill="#b4b6dc" opacity="0.6"/><rect x="0.90" y="6.00" width="0.7" height="0.7" fill="#b4b6dc" opacity="0.6"/><rect x="2.40" y="6.00" width="0.7" height="0.7" fill="#b4b6dc" opacity="0.6"/><rect x="3.90" y="6.00" width="0.7" height="0.7" fill="#b4b6dc" opacity="0.6"/><rect x="5.40" y="6.00" width="0.7" height="0.7" fill="#b4b6dc" opacity="0.6"/><rect x="6.90" y="6.00" width="0.7" height="0.7" fill="#b4b6dc" opacity="0.6"/><rect width="15" height="12" fill="url(#gl)"/></svg>
<span class="url from" style="letter-spacing:0.231px">http://ecommercebusinessbureau.com/searchcap-google-payday-loans-google-maps-edits-more/</span><svg class="ext e1" width="12" height="12" viewBox="0 0 12 12"><path d="M0.75 2.2 V11.25 H9.8" fill="none" stroke="#aaa" stroke-width="1.5"/><path d="M3.9 8.1 L10 2" fill="none" stroke="#aaa" stroke-width="2" stroke-linecap="round"/><path d="M6.8 0 H12 V5.2 Z" fill="#aaa"/></svg>
<span class="na">N/A</span><span class="url to" style="letter-spacing:0.405px">https://www.rankranger.com/blog/mobile-serp-features-tracker</span><svg class="ext e2" width="12" height="12" viewBox="0 0 12 12"><path d="M0.75 2.2 V11.25 H9.8" fill="none" stroke="#aaa" stroke-width="1.5"/><path d="M3.9 8.1 L10 2" fill="none" stroke="#aaa" stroke-width="2" stroke-linecap="round"/><path d="M6.8 0 H12 V5.2 Z" fill="#aaa"/></svg>
</div><div class="row" style="top:468px;background:#ffffff">
<span class="num">1863</span><span class="sq" style="background:#2b9559;border-color:#1f8a4c"></span><svg class="flag" width="15" height="12" viewBox="0 0 15 12"><rect x="0" y="0.000" width="15" height="1.724" fill="#e2404e"/><rect x="0" y="1.714" width="15" height="1.724" fill="#ffffff"/><rect x="0" y="3.429" width="15" height="1.724" fill="#e2404e"/><rect x="0" y="5.143" width="15" height="1.724" fill="#ffffff"/><rect x="0" y="6.857" width="15" height="1.724" fill="#e2404e"/><rect x="0" y="8.571" width="15" height="1.724" fill="#ffffff"/><rect x="0" y="10.286" width="15" height="1.724" fill="#e2404e"/><rect x="0" y="0" width="8.3" height="7.2" fill="url(#cn)"/><rect x="0.90" y="0.80" width="0.7" height="0.7" fill="#b4b6dc" opacity="0.6"/><rect x="2.40" y="0.80" width="0.7" height="0.7" fill="#b4b6dc" opacity="0.6"/><rect x="3.90" y="0.80" width="0.7" height="0.7" fill="#b4b6dc" opacity="0.6"/><rect x="5.40" y="0.80" width="0.7" height="0.7" fill="#b4b6dc" opacity="0.6"/><rect x="6.90" y="0.80" width="0.7" height="0.7" fill="#b4b6dc" opacity="0.6"/><rect x="0.90" y="2.10" width="0.7" height="0.7" fill="#b4b6dc" opacity="0.6"/><rect x="2.40" y="2.10" width="0.7" height="0.7" fill="#b4b6dc" opacity="0.6"/><rect x="3.90" y="2.10" width="0.7" height="0.7" fill="#b4b6dc" opacity="0.6"/><rect x="5.40" y="2.10" width="0.7" height="0.7" fill="#b4b6dc" opacity="0.6"/><rect x="6.90" y="2.10" width="0.7" height="0.7" fill="#b4b6dc" opacity="0.6"/><rect x="0.90" y="3.40" width="0.7" height="0.7" fill="#b4b6dc" opacity="0.6"/><rect x="2.40" y="3.40" width="0.7" height="0.7" fill="#b4b6dc" opacity="0.6"/><rect x="3.90" y="3.40" width="0.7" height="0.7" fill="#b4b6dc" opacity="0.6"/><rect x="5.40" y="3.40" width="0.7" height="0.7" fill="#b4b6dc" opacity="0.6"/><rect x="6.90" y="3.40" width="0.7" height="0.7" fill="#b4b6dc" opacity="0.6"/><rect x="0.90" y="4.70" width="0.7" height="0.7" fill="#b4b6dc" opacity="0.6"/><rect x="2.40" y="4.70" width="0.7" height="0.7" fill="#b4b6dc" opacity="0.6"/><rect x="3.90" y="4.70" width="0.7" height="0.7" fill="#b4b6dc" opacity="0.6"/><rect x="5.40" y="4.70" width="0.7" height="0.7" fill="#b4b6dc" opacity="0.6"/><rect x="6.90" y="4.70" width="0.7" height="0.7" fill="#b4b6dc" opacity="0.6"/><rect x="0.90" y="6.00" width="0.7" height="0.7" fill="#b4b6dc" opacity="0.6"/><rect x="2.40" y="6.00" width="0.7" height="0.7" fill="#b4b6dc" opacity="0.6"/><rect x="3.90" y="6.00" width="0.7" height="0.7" fill="#b4b6dc" opacity="0.6"/><rect x="5.40" y="6.00" width="0.7" height="0.7" fill="#b4b6dc" opacity="0.6"/><rect x="6.90" y="6.00" width="0.7" height="0.7" fill="#b4b6dc" opacity="0.6"/><rect width="15" height="12" fill="url(#gl)"/></svg>
<span class="url from" style="letter-spacing:0.179px">http://searchengineland.com/searchcap-google-payday-loans-google-maps-edits-254340</span><svg class="ext e1" width="12" height="12" viewBox="0 0 12 12"><path d="M0.75 2.2 V11.25 H9.8" fill="none" stroke="#aaa" stroke-width="1.5"/><path d="M3.9 8.1 L10 2" fill="none" stroke="#aaa" stroke-width="2" stroke-linecap="round"/><path d="M6.8 0 H12 V5.2 Z" fill="#aaa"/></svg>
<span class="na">N/A</span><span class="url to" style="letter-spacing:0.405px">https://www.rankranger.com/blog/mobile-serp-features-tracker</span><svg class="ext e2" width="12" height="12" viewBox="0 0 12 12"><path d="M0.75 2.2 V11.25 H9.8" fill="none" stroke="#aaa" stroke-width="1.5"/><path d="M3.9 8.1 L10 2" fill="none" stroke="#aaa" stroke-width="2" stroke-linecap="round"/><path d="M6.8 0 H12 V5.2 Z" fill="#aaa"/></svg>
</div><div class="row" style="top:507px;background:#f9f9f9">
<span class="num">1865</span><span class="sq" style="background:#7f0e0e;border-color:#730808"></span><svg class="flag" width="15" height="12" viewBox="0 0 15 12"><rect width="15" height="4" fill="#fff"/><rect y="4" width="15" height="4" fill="#2a9a68"/><rect y="8" width="15" height="4" fill="#e0343f"/><rect width="15" height="12" fill="url(#gl)"/></svg>
<span class="url from" style="letter-spacing:0.303px">http://seobodhi.com/google-algorithm-update-a-reversal-of-last-weeks-update/</span><svg class="ext e1" width="12" height="12" viewBox="0 0 12 12"><path d="M0.75 2.2 V11.25 H9.8" fill="none" stroke="#aaa" stroke-width="1.5"/><path d="M3.9 8.1 L10 2" fill="none" stroke="#aaa" stroke-width="2" stroke-linecap="round"/><path d="M6.8 0 H12 V5.2 Z" fill="#aaa"/></svg>
<span class="na">N/A</span><span class="url to" style="letter-spacing:0.437px">https://www.rankranger.com/rank-risk-index</span><svg class="ext e2" width="12" height="12" viewBox="0 0 12 12"><path d="M0.75 2.2 V11.25 H9.8" fill="none" stroke="#aaa" stroke-width="1.5"/><path d="M3.9 8.1 L10 2" fill="none" stroke="#aaa" stroke-width="2" stroke-linecap="round"/><path d="M6.8 0 H12 V5.2 Z" fill="#aaa"/></svg>
</div><div class="row" style="top:546px;background:#ffffff">
<span class="num">1866</span><span class="sq" style="background:#2b9559;border-color:#1f8a4c"></span><svg class="flag" width="15" height="12" viewBox="0 0 15 12"><rect x="0" y="0.000" width="15" height="1.724" fill="#e2404e"/><rect x="0" y="1.714" width="15" height="1.724" fill="#ffffff"/><rect x="0" y="3.429" width="15" height="1.724" fill="#e2404e"/><rect x="0" y="5.143" width="15" height="1.724" fill="#ffffff"/><rect x="0" y="6.857" width="15" height="1.724" fill="#e2404e"/><rect x="0" y="8.571" width="15" height="1.724" fill="#ffffff"/><rect x="0" y="10.286" width="15" height="1.724" fill="#e2404e"/><rect x="0" y="0" width="8.3" height="7.2" fill="url(#cn)"/><rect x="0.90" y="0.80" width="0.7" height="0.7" fill="#b4b6dc" opacity="0.6"/><rect x="2.40" y="0.80" width="0.7" height="0.7" fill="#b4b6dc" opacity="0.6"/><rect x="3.90" y="0.80" width="0.7" height="0.7" fill="#b4b6dc" opacity="0.6"/><rect x="5.40" y="0.80" width="0.7" height="0.7" fill="#b4b6dc" opacity="0.6"/><rect x="6.90" y="0.80" width="0.7" height="0.7" fill="#b4b6dc" opacity="0.6"/><rect x="0.90" y="2.10" width="0.7" height="0.7" fill="#b4b6dc" opacity="0.6"/><rect x="2.40" y="2.10" width="0.7" height="0.7" fill="#b4b6dc" opacity="0.6"/><rect x="3.90" y="2.10" width="0.7" height="0.7" fill="#b4b6dc" opacity="0.6"/><rect x="5.40" y="2.10" width="0.7" height="0.7" fill="#b4b6dc" opacity="0.6"/><rect x="6.90" y="2.10" width="0.7" height="0.7" fill="#b4b6dc" opacity="0.6"/><rect x="0.90" y="3.40" width="0.7" height="0.7" fill="#b4b6dc" opacity="0.6"/><rect x="2.40" y="3.40" width="0.7" height="0.7" fill="#b4b6dc" opacity="0.6"/><rect x="3.90" y="3.40" width="0.7" height="0.7" fill="#b4b6dc" opacity="0.6"/><rect x="5.40" y="3.40" width="0.7" height="0.7" fill="#b4b6dc" opacity="0.6"/><rect x="6.90" y="3.40" width="0.7" height="0.7" fill="#b4b6dc" opacity="0.6"/><rect x="0.90" y="4.70" width="0.7" height="0.7" fill="#b4b6dc" opacity="0.6"/><rect x="2.40" y="4.70" width="0.7" height="0.7" fill="#b4b6dc" opacity="0.6"/><rect x="3.90" y="4.70" width="0.7" height="0.7" fill="#b4b6dc" opacity="0.6"/><rect x="5.40" y="4.70" width="0.7" height="0.7" fill="#b4b6dc" opacity="0.6"/><rect x="6.90" y="4.70" width="0.7" height="0.7" fill="#b4b6dc" opacity="0.6"/><rect x="0.90" y="6.00" width="0.7" height="0.7" fill="#b4b6dc" opacity="0.6"/><rect x="2.40" y="6.00" width="0.7" height="0.7" fill="#b4b6dc" opacity="0.6"/><rect x="3.90" y="6.00" width="0.7" height="0.7" fill="#b4b6dc" opacity="0.6"/><rect x="5.40" y="6.00" width="0.7" height="0.7" fill="#b4b6dc" opacity="0.6"/><rect x="6.90" y="6.00" width="0.7" height="0.7" fill="#b4b6dc" opacity="0.6"/><rect width="15" height="12" fill="url(#gl)"/></svg>
<span class="url from" style="letter-spacing:0.333px">http://www.websitetrafficonline.com/google-algorithm-update-a-reversal-of-last-weeks-update/</span><svg class="ext e1" width="12" height="12" viewBox="0 0 12 12"><path d="M0.75 2.2 V11.25 H9.8" fill="none" stroke="#aaa" stroke-width="1.5"/><path d="M3.9 8.1 L10 2" fill="none" stroke="#aaa" stroke-width="2" stroke-linecap="round"/><path d="M6.8 0 H12 V5.2 Z" fill="#aaa"/></svg>
<span class="na">N/A</span><span class="url to" style="letter-spacing:0.437px">https://www.rankranger.com/rank-risk-index</span><svg class="ext e2" width="12" height="12" viewBox="0 0 12 12"><path d="M0.75 2.2 V11.25 H9.8" fill="none" stroke="#aaa" stroke-width="1.5"/><path d="M3.9 8.1 L10 2" fill="none" stroke="#aaa" stroke-width="2" stroke-linecap="round"/><path d="M6.8 0 H12 V5.2 Z" fill="#aaa"/></svg>
</div><div class="row" style="top:585px;background:#f9f9f9">
<span class="num">1867</span><span class="sq" style="background:#d2691f;border-color:#c75f17"></span><svg class="flag" width="15" height="12" viewBox="0 0 15 12"><rect x="0" y="0.000" width="15" height="1.724" fill="#e2404e"/><rect x="0" y="1.714" width="15" height="1.724" fill="#ffffff"/><rect x="0" y="3.429" width="15" height="1.724" fill="#e2404e"/><rect x="0" y="5.143" width="15" height="1.724" fill="#ffffff"/><rect x="0" y="6.857" width="15" height="1.724" fill="#e2404e"/><rect x="0" y="8.571" width="15" height="1.724" fill="#ffffff"/><rect x="0" y="10.286" width="15" height="1.724" fill="#e2404e"/><rect x="0" y="0" width="8.3" height="7.2" fill="url(#cn)"/><rect x="0.90" y="0.80" width="0.7" height="0.7" fill="#b4b6dc" opacity="0.6"/><rect x="2.40" y="0.80" width="0.7" height="0.7" fill="#b4b6dc" opacity="0.6"/><rect x="3.90" y="0.80" width="0.7" height="0.7" fill="#b4b6dc" opacity="0.6"/><rect x="5.40" y="0.80" width="0.7" height="0.7" fill="#b4b6dc" opacity="0.6"/><rect x="6.90" y="0.80" width="0.7" height="0.7" fill="#b4b6dc" opacity="0.6"/><rect x="0.90" y="2.10" width="0.7" height="0.7" fill="#b4b6dc" opacity="0.6"/><rect x="2.40" y="2.10" width="0.7" height="0.7" fill="#b4b6dc" opacity="0.6"/><rect x="3.90" y="2.10" width="0.7" height="0.7" fill="#b4b6dc" opacity="0.6"/><rect x="5.40" y="2.10" width="0.7" height="0.7" fill="#b4b6dc" opacity="0.6"/><rect x="6.90" y="2.10" width="0.7" height="0.7" fill="#b4b6dc" opacity="0.6"/><rect x="0.90" y="3.40" width="0.7" height="0.7" fill="#b4b6dc" opacity="0.6"/><rect x="2.40" y="3.40" width="0.7" height="0.7" fill="#b4b6dc" opacity="0.6"/><rect x="3.90" y="3.40" width="0.7" height="0.7" fill="#b4b6dc" opacity="0.6"/><rect x="5.40" y="3.40" width="0.7" height="0.7" fill="#b4b6dc" opacity="0.6"/><rect x="6.90" y="3.40" width="0.7" height="0.7" fill="#b4b6dc" opacity="0.6"/><rect x="0.90" y="4.70" width="0.7" height="0.7" fill="#b4b6dc" opacity="0.6"/><rect x="2.40" y="4.70" width="0.7" height="0.7" fill="#b4b6dc" opacity="0.6"/><rect x="3.90" y="4.70" width="0.7" height="0.7" fill="#b4b6dc" opacity="0.6"/><rect x="5.40" y="4.70" width="0.7" height="0.7" fill="#b4b6dc" opacity="0.6"/><rect x="6.90" y="4.70" width="0.7" height="0.7" fill="#b4b6dc" opacity="0.6"/><rect x="0.90" y="6.00" width="0.7" height="0.7" fill="#b4b6dc" opacity="0.6"/><rect x="2.40" y="6.00" width="0.7" height="0.7" fill="#b4b6dc" opacity="0.6"/><rect x="3.90" y="6.00" width="0.7" height="0.7" fill="#b4b6dc" opacity="0.6"/><rect x="5.40" y="6.00" width="0.7" height="0.7" fill="#b4b6dc" opacity="0.6"/><rect x="6.90" y="6.00" width="0.7" height="0.7" fill="#b4b6dc" opacity="0.6"/><rect width="15" height="12" fill="url(#gl)"/></svg>
<span class="url from" style="letter-spacing:0.361px">http://globalurlpromoter.com/did-google-boosts-https-ranking-signal-nope-but-more-https-results-in-t...</span><svg class="ext e1" width="12" height="12" viewBox="0 0 12 12"><path d="M0.75 2.2 V11.25 H9.8" fill="none" stroke="#aaa" stroke-width="1.5"/><path d="M3.9 8.1 L10 2" fill="none" stroke="#aaa" stroke-width="2" stroke-linecap="round"/><path d="M6.8 0 H12 V5.2 Z" fill="#aaa"/></svg>
<span class="na">N/A</span><span class="url to" style="letter-spacing:0.387px">https://www.rankranger.com/google-serp-features</span><svg class="ext e2" width="12" height="12" viewBox="0 0 12 12"><path d="M0.75 2.2 V11.25 H9.8" fill="none" stroke="#aaa" stroke-width="1.5"/><path d="M3.9 8.1 L10 2" fill="none" stroke="#aaa" stroke-width="2" stroke-linecap="round"/><path d="M6.8 0 H12 V5.2 Z" fill="#aaa"/></svg>
</div><div class="row" style="top:624px;background:#ffffff">
<span class="num">1868</span><span class="sq" style="background:#2b9559;border-color:#1f8a4c"></span><svg class="flag" width="15" height="12" viewBox="0 0 15 12"><rect width="15" height="12" fill="#e23a3f"/><rect width="6" height="12" fill="#2e8a3e"/><circle cx="6" cy="6" r="2.3" fill="#f2d13c"/><circle cx="6" cy="6" r="1.3" fill="#d33"/><rect width="15" height="12" fill="url(#gl)"/></svg>
<span class="url from" style="letter-spacing:0.279px">https://blog.digital22.com/have-there-been-two-google-algorithm-updates-in-a-week</span><svg class="ext e1" width="12" height="12" viewBox="0 0 12 12"><path d="M0.75 2.2 V11.25 H9.8" fill="none" stroke="#aaa" stroke-width="1.5"/><path d="M3.9 8.1 L10 2" fill="none" stroke="#aaa" stroke-width="2" stroke-linecap="round"/><path d="M6.8 0 H12 V5.2 Z" fill="#aaa"/></svg>
<span class="na">N/A</span><span class="url to" style="letter-spacing:0.437px">https://www.rankranger.com/rank-risk-index</span><svg class="ext e2" width="12" height="12" viewBox="0 0 12 12"><path d="M0.75 2.2 V11.25 H9.8" fill="none" stroke="#aaa" stroke-width="1.5"/><path d="M3.9 8.1 L10 2" fill="none" stroke="#aaa" stroke-width="2" stroke-linecap="round"/><path d="M6.8 0 H12 V5.2 Z" fill="#aaa"/></svg>
</div>
</div>
</div>
</body></html>
